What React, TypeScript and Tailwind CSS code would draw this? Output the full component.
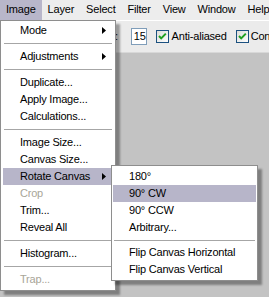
import React from 'react';

type Entry = { label?: string; arrow?: boolean; disabled?: boolean; active?: boolean; sep?: boolean };

const mainItems: Entry[] = [
  { label: 'Mode', arrow: true },
  { sep: true },
  { label: 'Adjustments', arrow: true },
  { sep: true },
  { label: 'Duplicate...' },
  { label: 'Apply Image...' },
  { label: 'Calculations...' },
  { sep: true },
  { label: 'Image Size...' },
  { label: 'Canvas Size...' },
  { label: 'Rotate Canvas', arrow: true, active: true },
  { label: 'Crop', disabled: true },
  { label: 'Trim...' },
  { label: 'Reveal All' },
  { sep: true },
  { label: 'Histogram...' },
  { sep: true },
  { label: 'Trap...', disabled: true },
];

const subItems: Entry[] = [
  { label: '180°' },
  { label: '90° CW', active: true },
  { label: '90° CCW' },
  { label: 'Arbitrary...' },
  { sep: true },
  { label: 'Flip Canvas Horizontal' },
  { label: 'Flip Canvas Vertical' },
];

const font = "font-['Liberation_Sans',Arial,sans-serif] text-[11px] tracking-[-0.2px]";

const Arrow = () => (
  <svg width="4" height="7" viewBox="0 0 4 7" className="shrink-0">
    <polygon points="0,0 4,3.5 0,7" fill="#000" />
  </svg>
);

const Check = () => (
  <svg width="13" height="13" viewBox="0 0 13 13" className="shrink-0">
    <defs>
      <linearGradient id="cbg" x1="0" y1="0" x2="1" y2="1">
        <stop offset="0" stopColor="#dcdcd7" />
        <stop offset="1" stopColor="#ffffff" />
      </linearGradient>
    </defs>
    <rect x="0.5" y="0.5" width="12" height="12" fill="url(#cbg)" stroke="#1c5180" />
    <polyline points="3,6 5.2,8.4 9.8,3.6" fill="none" stroke="#21a121" strokeWidth="2" />
  </svg>
);

function Menu({ items, sepH, indent }: { items: Entry[]; sepH: string; indent: string }) {
  return (
    <>
      {items.map((it, i) =>
        it.sep ? (
          <div key={i} className={`${sepH} flex items-center px-[1px]`}>
            <div className="h-px w-full bg-[#a6a6a6]" />
          </div>
        ) : (
          <div
            key={i}
            className={`flex items-center h-[17px] leading-[17px] ${indent} pr-[7px] ${
              it.active ? 'bg-[#b7b5c9]' : ''
            } ${it.disabled ? 'text-[#a8a598]' : 'text-black'}`}
          >
            <span className="flex-1 whitespace-nowrap">{it.label}</span>
            {it.arrow && <Arrow />}
          </div>
        )
      )}
    </>
  );
}

export default function App() {
  const bar = ['Image', 'Layer', 'Select', 'Filter', 'View', 'Window', 'Help'];
  return (
    <div className={`relative w-[269px] h-[297px] overflow-hidden bg-[#c3c3c3] ${font}`}>
      <div className="flex h-[20px] bg-[#ededed] whitespace-nowrap">
        {bar.map((b, i) => (
          <div key={b} className={`px-[6px] leading-[19px] text-black ${i === 0 ? 'bg-[#b8b6ca]' : ''}`}>
            {b}
          </div>
        ))}
      </div>
      <div className="h-[33px] bg-[#ebebeb] border-t border-white border-b border-b-[#d8d8d8] flex items-center pl-[69px] whitespace-nowrap text-black">
        <span>Tolerance:</span>
        <div className="ml-[13px] w-[25px] h-[17px] border border-[#7f9db9] bg-white pl-[2px] leading-[15px]">15</div>
        <div className="ml-[9px]"><Check /></div>
        <span className="ml-[3px]">Anti-aliased</span>
        <div className="ml-[9px]"><Check /></div>
        <span className="ml-[2px]">Contiguous</span>
      </div>

      <div className="absolute left-0 top-[20px] w-[116px] bg-white border border-[#8e8e8e] pt-[1px] pb-[2px] px-[2px] shadow-[4px_4px_2px_rgba(0,0,0,0.35)]">
        <Menu items={mainItems} sepH="h-[9px]" indent="pl-[17px]" />
      </div>

      <div className="absolute left-[111px] top-[165px] w-[147px] bg-white border border-[#8e8e8e] py-[2px] px-[1px] shadow-[4px_4px_2px_rgba(0,0,0,0.35)]">
        <Menu items={subItems} sepH="h-[8px]" indent="pl-[16px]" />
      </div>
    </div>
  );
}
